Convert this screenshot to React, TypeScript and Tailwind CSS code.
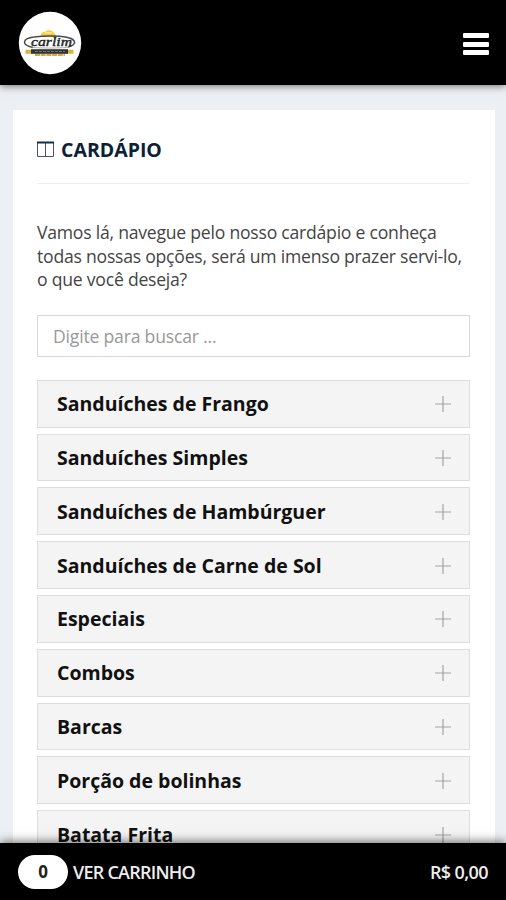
import { useState } from "react";

const categories = [
  "Sanduíches de Frango",
  "Sanduíches Simples",
  "Sanduíches de Hambúrguer",
  "Sanduíches de Carne de Sol",
  "Especiais",
  "Combos",
  "Barcas",
  "Porção de bolinhas",
  "Batata Frita",
];

function Logo() {
  return (
    <svg viewBox="0 0 64 64" className="size-16" role="img" aria-label="Carlim">
      <circle cx="32" cy="32" r="31.2" fill="#fff" />
      <path d="M23 26c-1-4 2-5 4-5 2-3 8-2 9 1 2 1 2 3 1 4z" fill="#f5cd3d" />
      <path d="M27 21.800h7" stroke="#fff3b0" strokeWidth="1" />
      <path
        d="M15 36.500C3 34 4 27.500 16 26c12-1.800 29-1.500 37 1.500 6 3 4 7-3 8.500"
        fill="none"
        stroke="#4a4d50"
        strokeWidth="1.500"
      />
      <path d="M14 36.300c9 1 25 1 36 0" fill="none" stroke="#8a8d90" strokeWidth=".7" />
      <text
        x="13"
        y="35"
        textLength="41"
        lengthAdjust="spacingAndGlyphs"
        className="font-['Liberation_Serif',serif] text-[12.500px] italic"
        fill="#222426"
        stroke="#222426"
        strokeWidth=".4"
      >
        carlim
      </text>
      <path d="M7.500 38.800h48v4h-48z" fill="#d9b53f" />
      <path d="M13 38.300h37v4.500H13z" fill="#303236" />
      <path d="M17 40.500h30" stroke="#77746a" strokeWidth="1" strokeDasharray="3 1" />
      <path d="M17 44h30" stroke="#d1a84c" strokeWidth="1.800" strokeDasharray="5 .7" />
    </svg>
  );
}

function Header() {
  return (
    <header className="relative z-10 flex h-[85px] shrink-0 items-center justify-between bg-black pr-[17px] pl-[18px] shadow-[0_1px_8px_rgba(0,0,0,0.55)]">
      <Logo />
      <button aria-label="Menu" className="mt-[3px] flex w-[26px] flex-col gap-[3.500px]">
        <span className="h-[5px] rounded-[1px] bg-white" />
        <span className="h-[5px] rounded-[1px] bg-white" />
        <span className="h-[5px] rounded-[1px] bg-white" />
      </button>
    </header>
  );
}

function CategoryRow({ name }: { name: string }) {
  return (
    <button className="flex h-[47.800px] w-full shrink-0 items-center justify-between border border-[#dddede] bg-[#f4f4f4] pr-[18.500px] pl-[19px] text-left text-[19.500px] font-bold text-[#111]">
      <span className="whitespace-nowrap">{name}</span>
      <svg viewBox="0 0 16 16" className="mt-px size-4" stroke="#a3a3a3" strokeWidth="1.2">
        <path d="M8 0v16M0 8h16" />
      </svg>
    </button>
  );
}

function CartBar() {
  return (
    <footer className="relative z-10 flex h-[57px] shrink-0 items-center justify-between bg-black pt-px pr-[18px] pl-[18px] text-[18px] font-semibold text-[#eee] shadow-[0_-1px_10px_rgba(0,0,0,0.6)]">
      <div className="flex items-center gap-[5px]">
        <span className="flex h-[34px] w-[50px] items-center justify-center rounded-full bg-white text-[17px] font-bold text-[#222]">
          0
        </span>
        <span className="tracking-[-0.75px] whitespace-nowrap">VER CARRINHO</span>
      </div>
      <span className="tracking-[-0.6px] whitespace-nowrap">R$ 0,00</span>
    </footer>
  );
}

export default function App() {
  const [query, setQuery] = useState("");

  return (
    <div className="flex h-[900px] w-[506px] flex-col overflow-hidden bg-[#ecf0f4] font-['Open_Sans',sans-serif]">
      <Header />
      <main className="min-h-0 flex-1 overflow-hidden pt-[25px] pr-[11px] pl-[13px]">
        <section className="flex h-[800px] flex-col bg-white pr-[25px] pl-6">
          <div className="flex h-[74px] shrink-0 items-center gap-[6px] border-b border-[#eee] pt-[6px]">
            <svg viewBox="0 0 18 17" className="h-[17px] w-[18px]" fill="none" stroke="#4c555e">
              <path d="M.5 2v13.500h16V2M8.500 2v14" />
              <path d="M0 1.500h17" stroke="#102e45" strokeWidth="2" />
            </svg>
            <h1 className="text-[19.500px] font-bold whitespace-nowrap text-[#0d2136]">CARDÁPIO</h1>
          </div>
          <p className="mt-[37px] text-[17.600px] leading-[23.500px] tracking-[-0.230px] whitespace-nowrap text-[#444]">
            Vamos lá, navegue pelo nosso cardápio e conheça
            <br />
            todas nossas opções, será um imenso prazer servi-lo,
            <br />
            o que você deseja?
          </p>
          <input
            value={query}
            onChange={(e) => setQuery(e.target.value)}
            placeholder="Digite para buscar ..."
            className="mt-[23px] h-[42px] w-full shrink-0 border border-[#d5d9dc] bg-white px-[15px] text-[17.600px] tracking-[-0.200px] outline-none placeholder:text-[#999]"
          />
          <div className="mt-[23.400px] flex flex-col gap-[6px]">
            {categories.map((name) => (
              <CategoryRow key={name} name={name} />
            ))}
          </div>
        </section>
      </main>
      <CartBar />
    </div>
  );
}
